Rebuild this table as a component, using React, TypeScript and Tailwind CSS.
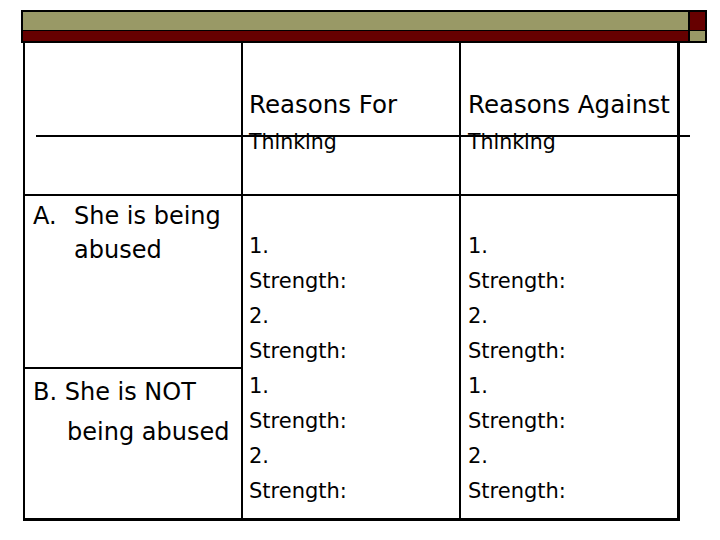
import React from 'react';

const font = { fontFamily: '"DejaVu Sans", Verdana, sans-serif' };

const strengthLines = ['1.', 'Strength:', '2.', 'Strength:', '1.', 'Strength:', '2.', 'Strength:'];

const HeaderCell: React.FC<{ title: string; pad: string; last?: boolean }> = ({ title, pad, last }) => (
  <div className={`h-[153px] border-b-2 border-black pt-[47px] ${pad} ${last ? '' : 'border-r-2'}`}>
    <div className="text-[24.5px] leading-[30px]">{title}</div>
    <div className="mt-[10px] text-[20.5px] leading-[24px]">Thinking</div>
  </div>
);

const StrengthCell: React.FC<{ pad: string; last?: boolean }> = ({ pad, last }) => (
  <div className={`pt-[33px] ${pad} ${last ? '' : 'border-r-2 border-black'}`}>
    {strengthLines.map((line, i) => (
      <div key={i} className="text-[21px] leading-[35px]">
        {line}
      </div>
    ))}
  </div>
);

export default function App() {
  return (
    <div className="relative w-[720px] h-[540px] overflow-hidden bg-white text-black" style={font}>
      {/* title bar */}
      <div className="ml-[21px] pt-[10px]">
        <div className="flex w-[686px] h-[33px] border-2 border-black">
          <div className="flex flex-1 flex-col">
            <div className="h-[18px] bg-[#999966]"></div>
            <div className="h-px bg-black"></div>
            <div className="flex-1 bg-[#660000]"></div>
          </div>
          <div className="flex w-[17px] flex-col border-l-2 border-black">
            <div className="h-[18px] bg-[#660000]"></div>
            <div className="h-px bg-black"></div>
            <div className="flex-1 bg-[#999966]"></div>
          </div>
        </div>
      </div>

      {/* table */}
      <div className="ml-[23px] w-[657px] border-l-2 border-r-[3px] border-b-[3px] border-black">
        <div className="grid grid-cols-[218px_218px_216px]">
          <div className="h-[153px] border-b-2 border-r-2 border-black"></div>
          <HeaderCell title="Reasons For" pad="pl-[6px]" />
          <HeaderCell title="Reasons Against" pad="pl-[7px]" last />
        </div>

        <div className="grid h-[322px] grid-cols-[218px_218px_216px]">
          <div className="flex flex-col border-r-2 border-black">
            <div className="h-[173px] border-b-2 border-black pt-[3px] pl-[8px] text-[24px] leading-[34px]">
              <div className="flex">
                <span className="w-[41px] shrink-0">A.</span>
                <span>
                  She is being
                  <br />
                  abused
                </span>
              </div>
            </div>
            <div className="pt-[3px] pl-[8px] text-[24px] leading-[40px]">
              <div>B. She is NOT</div>
              <div className="pl-[34px]">being abused</div>
            </div>
          </div>
          <StrengthCell pad="pl-[6px]" />
          <StrengthCell pad="pl-[7px]" last />
        </div>
      </div>

      {/* line drawn across the header */}
      <div className="absolute left-[36px] top-[135px] h-[2px] w-[654px] bg-black"></div>
    </div>
  );
}
